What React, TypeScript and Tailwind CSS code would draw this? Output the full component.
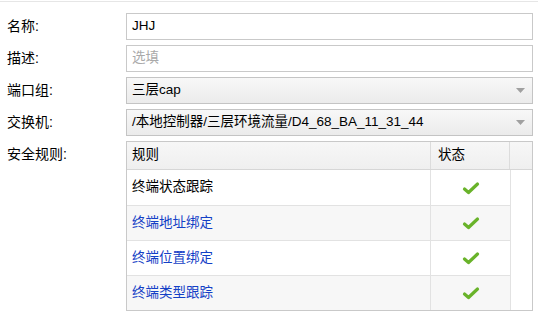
import React from "react";

const font = { fontFamily: '"Liberation Sans", "Noto Sans CJK SC", sans-serif' };

const rules = [
  { name: "终端状态跟踪", link: false },
  { name: "终端地址绑定", link: true },
  { name: "终端位置绑定", link: true },
  { name: "终端类型跟踪", link: true },
];

function Check() {
  return (
    <svg width="18" height="14" viewBox="0 0 18 14">
      <path d="M2.5 8 L6.5 11.5 L15.5 3" fill="none" stroke="#69b32a" strokeWidth="3.2" strokeLinecap="round" strokeLinejoin="round" />
    </svg>
  );
}

function Arrow() {
  return (
    <svg width="9" height="5" viewBox="0 0 9 5" className="mr-[7px]">
      <path d="M0 0 H9 L4.5 5 Z" fill="#a0a0a0" />
    </svg>
  );
}

function Label({ text }: { text: string }) {
  return <div className="w-[119px] shrink-0 text-[14px] text-black">{text}</div>;
}

export default function App() {
  return (
    <div className="w-[538px] h-[326px] bg-white overflow-hidden border-t border-[#e6e6e6] mt-[1px]" style={font}>
      <div className="pl-[7px] pr-[5px] pt-[11px] flex flex-col gap-[5px]">
        {/* 名称 */}
        <div className="flex items-center h-[27px]">
          <Label text="名称:" />
          <div className="flex-1 h-[27px] border border-[#c9c9c9] bg-white flex items-center px-[5px] text-[13.5px] text-black">
            JHJ
          </div>
        </div>

        {/* 描述 */}
        <div className="flex items-center h-[27px]">
          <Label text="描述:" />
          <div className="flex-1 h-[27px] border border-[#c9c9c9] bg-white flex items-center px-[5px] text-[13.5px] text-[#a9a9a9]">
            选填
          </div>
        </div>

        {/* 端口组 */}
        <div className="flex items-center h-[27px]">
          <Label text="端口组:" />
          <div className="flex-1 h-[27px] border border-[#c4c4c4] bg-gradient-to-b from-[#f8f8f8] to-[#ebebeb] flex items-center justify-between pl-[5px] text-[13.5px] text-black">
            <span>三层cap</span>
            <Arrow />
          </div>
        </div>

        {/* 交换机 */}
        <div className="flex items-center h-[27px]">
          <Label text="交换机:" />
          <div className="flex-1 h-[27px] border border-[#c4c4c4] bg-gradient-to-b from-[#f8f8f8] to-[#ebebeb] flex items-center justify-between pl-[5px] text-[13.5px] text-black">
            <span>/本地控制器/三层环境流量/D4_68_BA_11_31_44</span>
            <Arrow />
          </div>
        </div>

        {/* 安全规则 */}
        <div className="flex items-start">
          <div className="w-[119px] shrink-0 text-[14px] text-black pt-[3px]">安全规则:</div>
          <div className="flex-1 border border-[#c9c9c9] bg-white text-[13.5px]">
            {/* 表头 */}
            <div className="flex h-[28px] bg-gradient-to-b from-[#f7f7f7] to-[#efefef] border-b border-[#d6d6d6] text-black">
              <div className="w-[304px] flex items-center pl-[5px] border-r border-[#dcdcdc]">规则</div>
              <div className="w-[79px] flex items-center pl-[7px] border-r border-[#dcdcdc]">状态</div>
              <div className="flex-1" />
            </div>
            {/* 数据行 */}
            <div className="flex">
              <div className="w-[384px] border-r border-[#e2e2e2]">
                {rules.map((r, i) => (
                  <div
                    key={r.name}
                    className={`flex h-[35px] ${i > 0 ? "border-t border-[#e2e2e2]" : ""} ${i % 2 === 1 ? "bg-[#f7f7f7]" : "bg-white"}`}
                  >
                    <div className={`w-[304px] flex items-center pl-[5px] border-r border-[#e2e2e2] ${r.link ? "text-[#1340c6]" : "text-black"}`}>
                      {r.name}
                    </div>
                    <div className="flex-1 flex items-center justify-center">
                      <Check />
                    </div>
                  </div>
                ))}
              </div>
              <div className="flex-1" />
            </div>
          </div>
        </div>
      </div>
    </div>
  );
}
